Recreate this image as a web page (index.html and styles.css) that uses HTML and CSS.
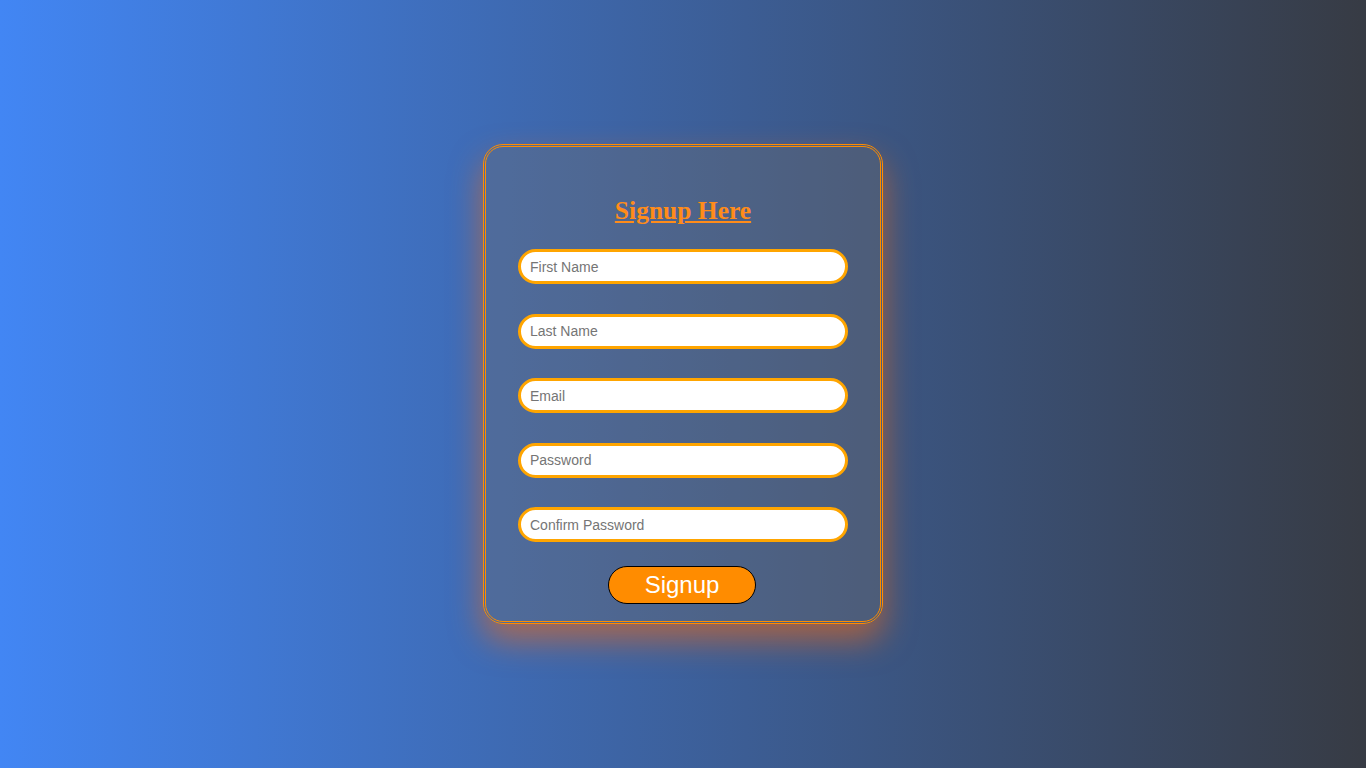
FILE: index.html
```html
<!DOCTYPE html>
<html lang="en">
<head>
<meta charset="utf-8">
<title>Signup</title>
<link rel="stylesheet" href="styles.css">
</head>
<body>
<main class="page">
  <form class="card">
    <h2 class="title">Signup Here</h2>
    <input class="field" type="text" placeholder="First Name">
    <input class="field" type="text" placeholder="Last Name">
    <input class="field" type="email" placeholder="Email">
    <input class="field" type="password" placeholder="Password">
    <input class="field" type="password" placeholder="Confirm Password">
    <button class="btn" type="button">Signup</button>
  </form>
</main>
</body>
</html>
```

FILE: styles.css
```css
html, body {
  margin: 0;
  padding: 0;
  height: 100%;
}
body {
  background: linear-gradient(to right, #4286f4, #373b44);
  font-family: "Liberation Sans", Arial, sans-serif;
}
.page {
  height: 100%;
  display: flex;
  align-items: center;
  justify-content: center;
}
.card {
  box-sizing: border-box;
  width: 400px;
  height: 480px;
  border: 3px double darkorange;
  border-radius: 20px;
  background: rgba(120, 110, 100, 0.3);
  box-shadow: 0 16px 32px rgba(255, 105, 10, 0.55);
  display: flex;
  flex-direction: column;
  align-items: center;
  padding-top: 49px;
}
.title {
  margin: 0 0 23px;
  font-family: "Liberation Serif", "Times New Roman", serif;
  font-size: 25.5px;
  line-height: 30px;
  font-weight: bold;
  color: #ff8c1a;
  text-decoration: underline;
}
.field {
  box-sizing: border-box;
  width: 330px;
  height: 35px;
  margin: 0 0 29.5px;
  padding: 0 9px;
  border: 3px solid orange;
  border-radius: 20px;
  background: #fff;
  font-family: "Liberation Sans", Arial, sans-serif;
  font-size: 14px;
  outline: none;
}
.field::placeholder {
  color: #757575;
}
.btn {
  box-sizing: border-box;
  width: 148px;
  height: 38px;
  margin: -6px 2px 0 0;
  border: 1px solid #000;
  border-radius: 20px;
  background: darkorange;
  color: #fff;
  font-family: "Liberation Sans", Arial, sans-serif;
  font-size: 24px;
  padding: 0;
}
```
